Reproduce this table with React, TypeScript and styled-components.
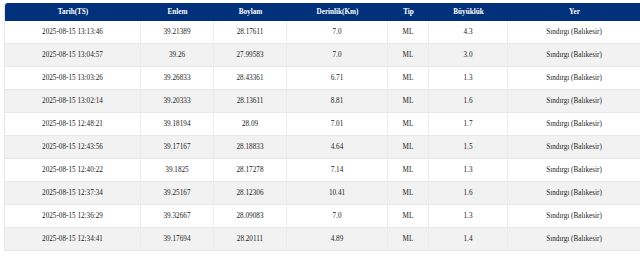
import * as React from "react";
import styled, { createGlobalStyle } from "styled-components";

interface Quake {
  date: string;
  lat: string;
  lon: string;
  depth: string;
  type: string;
  mag: string;
  place: string;
}

const quakes: Quake[] = [
  { date: "2025-08-15 13:13:46", lat: "39.21389", lon: "28.17611", depth: "7.0", type: "ML", mag: "4.3", place: "Sındırgı (Balıkesir)" },
  { date: "2025-08-15 13:04:57", lat: "39.26", lon: "27.99583", depth: "7.0", type: "ML", mag: "3.0", place: "Sındırgı (Balıkesir)" },
  { date: "2025-08-15 13:03:26", lat: "39.26833", lon: "28.43361", depth: "6.71", type: "ML", mag: "1.3", place: "Sındırgı (Balıkesir)" },
  { date: "2025-08-15 13:02:14", lat: "39.20333", lon: "28.13611", depth: "8.81", type: "ML", mag: "1.6", place: "Sındırgı (Balıkesir)" },
  { date: "2025-08-15 12:48:21", lat: "39.18194", lon: "28.09", depth: "7.01", type: "ML", mag: "1.7", place: "Sındırgı (Balıkesir)" },
  { date: "2025-08-15 12:43:56", lat: "39.17167", lon: "28.18833", depth: "4.64", type: "ML", mag: "1.5", place: "Sındırgı (Balıkesir)" },
  { date: "2025-08-15 12:40:22", lat: "39.1825", lon: "28.17278", depth: "7.14", type: "ML", mag: "1.3", place: "Sındırgı (Balıkesir)" },
  { date: "2025-08-15 12:37:34", lat: "39.25167", lon: "28.12306", depth: "10.41", type: "ML", mag: "1.6", place: "Sındırgı (Balıkesir)" },
  { date: "2025-08-15 12:36:29", lat: "39.32667", lon: "28.09083", depth: "7.0", type: "ML", mag: "1.3", place: "Sındırgı (Balıkesir)" },
  { date: "2025-08-15 12:34:41", lat: "39.17694", lon: "28.20111", depth: "4.89", type: "ML", mag: "1.4", place: "Sındırgı (Balıkesir)" },
];

const columns: { title: string; width: number }[] = [
  { title: "Tarih(TS)", width: 136 },
  { title: "Enlem", width: 73 },
  { title: "Boylam", width: 73 },
  { title: "Derinlik(Km)", width: 101 },
  { title: "Tip", width: 41 },
  { title: "Büyüklük", width: 79 },
  { title: "Yer", width: 133 },
];

const GlobalStyle = createGlobalStyle`
  body {
    margin: 0;
    background: #ffffff;
    font-family: "Liberation Serif", "Times New Roman", serif;
  }
`;

function App() {
  return (
    <>
      <GlobalStyle />
      <StyledWrap>
        <QuakeTable>
          <colgroup>
            {columns.map((c) => (
              <col key={c.title} style={{ width: c.width }} />
            ))}
          </colgroup>
          <thead>
            <tr>
              {columns.map((c) => (
                <HeadCell key={c.title}>{c.title}</HeadCell>
              ))}
            </tr>
          </thead>
          <tbody>
            {quakes.map((q) => (
              <Row key={q.date}>
                <Cell>{q.date}</Cell>
                <Cell>{q.lat}</Cell>
                <Cell>{q.lon}</Cell>
                <Cell>{q.depth}</Cell>
                <Cell>{q.type}</Cell>
                <Cell>{q.mag}</Cell>
                <Cell>{q.place}</Cell>
              </Row>
            ))}
          </tbody>
        </QuakeTable>
      </StyledWrap>
    </>
  );
}
export default App;

const StyledWrap = styled.div`
  padding: 3px 0 0 4px;
  width: 636px;
  height: 253px;
  overflow: hidden;
`;

const QuakeTable = styled.table`
  width: 636px;
  table-layout: fixed;
  border-collapse: separate;
  border-spacing: 0;
  font-size: 7.2px;
  color: #222222;
  border-left: 1px solid #e6e6e6;
  border-top-left-radius: 3px;
`;

const HeadCell = styled.th`
  height: 18px;
  padding: 0;
  background: #00317a;
  color: #ffffff;
  font-weight: bold;
  text-align: center;
  &:first-child {
    border-top-left-radius: 3px;
  }
`;

const Row = styled.tr`
  &:nth-child(even) td {
    background: #f2f2f2;
  }
`;

const Cell = styled.td`
  height: 22px;
  padding: 0;
  text-align: center;
  background: #ffffff;
  border-bottom: 1px solid #e8e8e8;
  border-right: 1px solid #ececec;
  white-space: nowrap;
`;
